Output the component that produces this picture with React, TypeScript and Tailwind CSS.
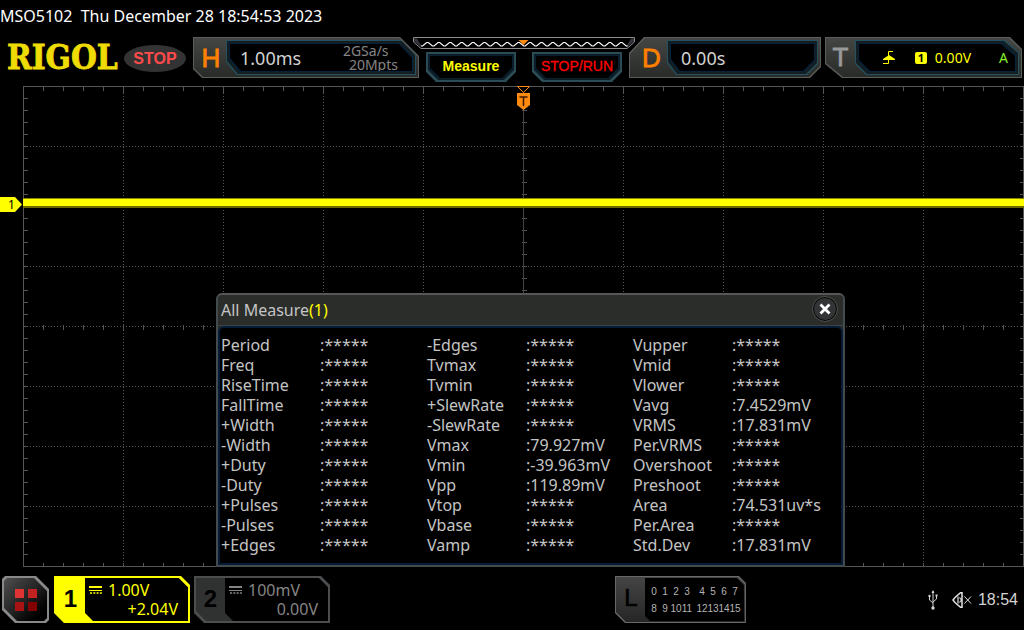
import React from "react";

const CUT_H_OUTER =
  "[clip-path:polygon(0_0,calc(100%_-_19px)_0,100%_19px,100%_100%,9px_100%,0_calc(100%_-_9px))]";
const CUT_H_INNER =
  "[clip-path:polygon(0_0,calc(100%_-_13px)_0,100%_14px,100%_100%,11px_100%,0_calc(100%_-_13px))]";
const CUT_D_OUTER =
  "[clip-path:polygon(15px_0,100%_0,100%_calc(100%_-_11px),calc(100%_-_11px)_100%,0_100%,0_16px)]";
const CUT_D_INNER =
  "[clip-path:polygon(0_0,100%_0,100%_calc(100%_-_11px),calc(100%_-_11px)_100%,9px_100%,0_calc(100%_-_12px))]";
const CUT_T_OUTER =
  "[clip-path:polygon(0_0,calc(100%_-_12px)_0,100%_12px,100%_100%,17px_100%,0_calc(100%_-_14px))]";
const CUT_T_INNER =
  "[clip-path:polygon(0_0,calc(100%_-_14px)_0,100%_12px,100%_100%,11px_100%,0_calc(100%_-_11px))]";
const CUT_SOFT_KEY =
  "[clip-path:polygon(0_0,100%_0,100%_calc(100%_-_10px),calc(100%_-_10px)_100%,10px_100%,0_calc(100%_-_10px))]";
const CUT_CHANNEL =
  "[clip-path:polygon(0_0,calc(100%_-_9px)_0,100%_9px,100%_100%,10px_100%,0_calc(100%_-_10px))]";
const CUT_CHANNEL_SCREEN =
  "[clip-path:polygon(0_0,calc(100%_-_9px)_0,100%_9px,100%_100%,8px_100%,0_calc(100%_-_8px))]";
const CUT_LOGIC =
  "[clip-path:polygon(0_0,calc(100%_-_7px)_0,100%_7px,100%_100%,10px_100%,0_calc(100%_-_10px))]";
const CUT_LOGIC_SCREEN =
  "[clip-path:polygon(0_0,calc(100%_-_7px)_0,100%_7px,100%_100%,5px_100%,0_calc(100%_-_5px))]";
const CUT_MENU =
  "[clip-path:polygon(3px_0,calc(100%_-_13px)_0,100%_13px,100%_calc(100%_-_3px),calc(100%_-_3px)_100%,13px_100%,0_calc(100%_-_13px),0_3px)]";

type PanelProps = {
  letter: string;
  letterClass: string;
  outer: string;
  inner: string;
  className?: string;
  children: React.ReactNode;
};

function Panel({ letter, letterClass, outer, inner, className = "", children }: PanelProps) {
  return (
    <button type="button" className={`flex h-[41px] bg-[#5a5d5a] p-px text-left ${outer} ${className}`}>
      <span className={`flex h-full grow bg-linear-to-b from-[#434643] to-[#292b29] py-0.5 pr-0.5 ${outer}`}>
        <span className={`flex shrink-0 items-center justify-center font-['Liberation_Sans'] text-[26px] leading-none ${letterClass}`}>
          {letter}
        </span>
        <span className={`flex grow bg-[#24505f] p-px ${inner}`}>
          <span className={`flex grow bg-[#141d20] p-0.5 ${inner}`}>
            <span className={`flex grow bg-[#06223c] p-px ${inner}`}>
              <span className={`flex grow items-center bg-black ${inner}`}>{children}</span>
            </span>
          </span>
        </span>
      </span>
    </button>
  );
}

function SoftKey({ className, children }: { className: string; children: React.ReactNode }) {
  return (
    <button type="button" className={`flex h-[30px] w-[90px] bg-[#2b4c57] p-0.5 ${CUT_SOFT_KEY}`}>
      <span className={`flex h-full grow bg-[#101a1d] p-px ${CUT_SOFT_KEY}`}>
        <span className={`flex grow bg-[#062036] p-px ${CUT_SOFT_KEY}`}>
          <span
            className={`flex grow items-center justify-center bg-black pb-0.5 font-['Liberation_Sans'] text-sm leading-none ${CUT_SOFT_KEY} ${className}`}
          >
            {children}
          </span>
        </span>
      </span>
    </button>
  );
}

function MemoryBar() {
  const points: string[] = [];
  for (let i = 0; i <= 36; i++) {
    const x = 8 + i * 5.7;
    points.push(`${x},${i % 2 ? 5.5 : 9} ${x + 1.6},${i % 2 ? 5.5 : 9}`);
  }
  return (
    <svg viewBox="0 0 222 13" className="h-[13px] w-[222px]" aria-hidden="true">
      <path d="M.5 .5H221.5V5L214 11.5H8L.5 5Z" fill="#000" stroke="#8b8b90" />
      <path d="M1 1.5H4L9 10H8L1 4.5Z M221 1.5H218L213 10H214L221 4.5Z" fill="#34343e" />
      <polyline points={points.join(" ")} fill="none" stroke="#fff" strokeWidth="1.2" />
      <path d="M105.500 3H115.500L110.500 8Z" fill="#ff8a10" />
    </svg>
  );
}

function Header() {
  return (
    <header className="grid h-[49px] grid-cols-[193px_226fr_210fr_192fr_203fr] items-start">
      <div className="flex h-[41px] items-center gap-1.5 pl-[7px]">
        <span className="w-[111px] font-['DejaVu_Serif_Condensed','DejaVu_Serif',serif] text-[33px] leading-none font-bold text-[#efdc05] [-webkit-text-stroke:0.8px]">
          RIGOL
        </span>
        <span className="mt-0.5 flex h-[27px] w-[62px] items-center justify-center rounded-[50%] bg-[#333] font-['Liberation_Sans'] text-base leading-none font-bold text-[#ff4b4b]">
          STOP
        </span>
      </div>

      <Panel letter="H" letterClass="w-8 pl-0.5 text-[#ff8000] [-webkit-text-stroke:0.8px]" outer={CUT_H_OUTER} inner={CUT_H_INNER}>
        <span className="grow pl-2.5 text-lg leading-none text-[#d2d2d2]">1.00ms</span>
        <span className="flex flex-col pr-3.5 text-sm leading-3.5 text-[#858585]">
          <span>2GSa/s</span>
          <span className="pl-1.5">20Mpts</span>
        </span>
      </Panel>

      <div className="relative z-10 -mx-1.5 flex flex-col items-center gap-0.5">
        <MemoryBar />
        <div className="flex gap-4">
          <SoftKey className="font-bold text-[#ffff00]">Measure</SoftKey>
          <SoftKey className="text-[#ff0000] [-webkit-text-stroke:0.3px]">STOP/RUN</SoftKey>
        </div>
      </div>

      <Panel letter="D" letterClass="w-[37px] pl-1.5 text-[#ff8000] [-webkit-text-stroke:0.8px]" outer={CUT_D_OUTER} inner={CUT_D_INNER}>
        <span className="pl-2.5 text-lg leading-none text-[#d2d2d2]">0.00s</span>
      </Panel>

      <Panel
        letter="T"
        letterClass="w-[29px] pb-0.5 text-[#999] [-webkit-text-stroke:0.8px]"
        outer={CUT_T_OUTER}
        inner={CUT_T_INNER}
        className="mr-0.5 ml-1"
      >
        <span className="flex grow items-center justify-end pr-[7px] text-sm leading-none text-[#ffff00]">
          <svg viewBox="0 0 12 13" className="mr-5 h-[13px] w-3" aria-hidden="true">
            <path d="M10 .5H5.500V12.500H0" fill="none" stroke="#ffff00" />
            <path d="M0 9V8L6 4L12 8V9Z" fill="#ffff00" />
          </svg>
          <span className="mr-2 flex size-3 items-center justify-center rounded-xs bg-[#ffff00] text-[11px] leading-none font-bold text-black">
            1
          </span>
          <span>0.00V</span>
          <span className="ml-7 text-[#86f02c]">A</span>
        </span>
      </Panel>
    </header>
  );
}

const range = (n: number) => Array.from({ length: n }, (_, i) => i);

function Graticule() {
  return (
    <svg className="absolute inset-0 h-full w-full overflow-visible" shapeRendering="crispEdges" aria-hidden="true">
      <g transform="translate(.5 .5)" stroke="#555" fill="none">
        <rect width="100%" height="100%" />
        {range(9).map((i) => (
          <g key={`c${i}`}>
            <line x1={`${(i + 1) * 10}%`} x2={`${(i + 1) * 10}%`} y1="0" y2="100%" strokeDasharray="1 2" />
            <line x1={`${(i + 1) * 10}%`} x2={`${(i + 1) * 10}%`} y1="0" y2="7" />
          </g>
        ))}
        {range(7).map((i) => (
          <line key={`r${i}`} y1={`${(i + 1) * 12.5}%`} y2={`${(i + 1) * 12.5}%`} x1="0" x2="100%" strokeDasharray="1 2" />
        ))}
        {range(49).map((i) => {
          const x = `${(i + 1) * 2}%`;
          return (
            <g key={`x${i}`}>
              <line x1={x} x2={x} y1="0" y2="4" />
              <svg y="50%" overflow="visible">
                <line x1={x} x2={x} y1="-2" y2="3" />
              </svg>
              <svg y="100%" overflow="visible">
                <line x1={x} x2={x} y1="-4" y2="0" />
              </svg>
            </g>
          );
        })}
        {range(39).map((i) => {
          const y = `${(i + 1) * 2.5}%`;
          return (
            <g key={`y${i}`}>
              <line y1={y} y2={y} x1="0" x2="4" />
              <svg x="50%" overflow="visible">
                <line y1={y} y2={y} x1="-2" x2="3" />
              </svg>
              <svg x="100%" overflow="visible">
                <line y1={y} y2={y} x1="-4" x2="0" />
              </svg>
            </g>
          );
        })}
        <line x1="50%" x2="50%" y1="0" y2="100%" stroke="#444" />
      </g>
    </svg>
  );
}

const NONE = "*****";
const MEASUREMENTS = [
  ["Period", NONE, "-Edges", NONE, "Vupper", NONE],
  ["Freq", NONE, "Tvmax", NONE, "Vmid", NONE],
  ["RiseTime", NONE, "Tvmin", NONE, "Vlower", NONE],
  ["FallTime", NONE, "+SlewRate", NONE, "Vavg", "7.4529mV"],
  ["+Width", NONE, "-SlewRate", NONE, "VRMS", "17.831mV"],
  ["-Width", NONE, "Vmax", "79.927mV", "Per.VRMS", NONE],
  ["+Duty", NONE, "Vmin", "-39.963mV", "Overshoot", NONE],
  ["-Duty", NONE, "Vpp", "119.89mV", "Preshoot", NONE],
  ["+Pulses", NONE, "Vtop", NONE, "Area", "74.531uv*s"],
  ["-Pulses", NONE, "Vbase", NONE, "Per.Area", NONE],
  ["+Edges", NONE, "Vamp", NONE, "Std.Dev", "17.831mV"],
];

function MeasureWindow() {
  return (
    <section
      aria-label="All Measure"
      className="absolute top-[207px] left-[193px] w-[629px] rounded-t-md border-2 border-[#444b4d] border-t-[#555855] bg-[#2b2d2b] text-base text-[#c4c4c4]"
    >
      <div className="flex h-[31px] items-center justify-between border-b border-[#3a4448] pr-1.5 pl-[3px]">
        <h2>
          All Measure<span className="text-[#ffff00]">(1)</span>
        </h2>
        <button
          type="button"
          aria-label="Close"
          className="mb-0.5 flex size-6 items-center justify-center rounded-full border border-black bg-[#333436] outline outline-[#4a4c4a]"
        >
          <svg viewBox="0 0 12 12" className="size-3" aria-hidden="true">
            <path d="M1.500 1.500L10.500 10.500M10.500 1.500L1.500 10.500" stroke="#fff" strokeWidth="2.800" />
          </svg>
        </button>
      </div>
      <div className="rounded-t-md border-2 border-[#061c36] bg-black pt-[7px] pb-2 pl-px">
        <table className="w-full table-fixed border-collapse text-left leading-5">
          <colgroup>
            <col className="w-[99px]" />
            <col className="w-[107px]" />
            <col className="w-[99px]" />
            <col className="w-[107px]" />
            <col className="w-[99px]" />
            <col />
          </colgroup>
          <tbody>
            {MEASUREMENTS.map((row) => (
              <tr key={row[0]} className="h-5">
                {row.map((cell, i) =>
                  i % 2 === 0 ? (
                    <th key={i} scope="row" className="p-0 font-normal whitespace-nowrap">
                      {cell}
                    </th>
                  ) : (
                    <td key={i} className="p-0 whitespace-nowrap">
                      :{cell}
                    </td>
                  ),
                )}
              </tr>
            ))}
          </tbody>
        </table>
      </div>
    </section>
  );
}

function Plot() {
  return (
    <main className="relative mr-px ml-[23px] min-h-[480px] grow">
      <Graticule />
      <div className="absolute top-28 -right-px left-0 h-2.5 border-t border-b-2 border-t-[#8a8a00] border-b-[#6e6a00] bg-[#ffff00]" />
      <div className="absolute top-[111px] -left-[23px] flex h-[15px] w-[22px] items-center bg-[#ffff00] pl-2 text-xs leading-none text-black [clip-path:polygon(0_0,15px_0,100%_50%,15px_100%,0_100%)]">
        1
      </div>
      <svg viewBox="0 0 14 24" className="absolute top-0 left-1/2 ml-[-6px] h-6 w-3.5" aria-hidden="true">
        <path d="M.5 .5H12.500L6.500 6.500Z" fill="#000" stroke="#ff8a10" />
        <path d="M0 7H13V19L6.500 24L0 19Z" fill="#ff8a10" />
        <path d="M2.500 11H10.500M6.500 11V20" stroke="#3a1c00" strokeWidth="1.500" />
      </svg>
      <MeasureWindow />
    </main>
  );
}

function DcCoupling() {
  return (
    <svg viewBox="0 0 13 8" className="h-2 w-[13px]" aria-hidden="true">
      <path d="M0 1H13" stroke="currentColor" strokeWidth="2" />
      <path d="M0 4.500H13" stroke="currentColor" />
      <path d="M1 7H13" stroke="currentColor" strokeWidth="1.500" strokeDasharray="2 1.300" />
    </svg>
  );
}

type ChannelProps = { id: string; scale: string; offset: string; active?: boolean };

function Channel({ id, scale, offset, active = false }: ChannelProps) {
  return (
    <button
      type="button"
      aria-pressed={active}
      className={`flex h-[47px] w-[136px] p-0.5 text-left leading-[19px] ${CUT_CHANNEL} ${
        active ? "bg-[#ffff00] text-[#ffff00]" : "bg-[#4b4d4f] text-[#858585]"
      }`}
    >
      <span className={`flex h-full grow ${CUT_CHANNEL} ${active ? "bg-[#ffff00]" : "bg-[#303131]"}`}>
        <span className="flex w-[29px] items-center justify-center pb-0.5 font-['Liberation_Sans'] text-2xl leading-none font-bold text-black">
          {id}
        </span>
        <span className={`flex grow flex-col justify-center bg-black pr-2.5 pl-1 ${CUT_CHANNEL_SCREEN}`}>
          <span className="flex items-center gap-1.5">
            <DcCoupling />
            {scale}
          </span>
          <span className="text-right">{offset}</span>
        </span>
      </span>
    </button>
  );
}

function LogicDigits({ rows }: { rows: number[][] }) {
  return (
    <span className="grid grid-cols-[repeat(4,11px)] gap-y-1.5 text-center">
      {rows.flat().map((n) => (
        <span key={n}>{n}</span>
      ))}
    </span>
  );
}

function Footer() {
  return (
    <footer className="flex items-start pt-2.5 pb-[7px] pl-0.5">
      <button type="button" aria-label="Menu" className={`flex size-[47px] bg-[#88898a] p-0.5 ${CUT_MENU}`}>
        <span className={`flex h-full grow items-center justify-center bg-linear-to-br from-[#505050] via-[#222] to-black ${CUT_MENU}`}>
          <span className="grid grid-cols-2 gap-1">
            <span className="size-[9px] bg-[#e03434]" />
            <span className="size-[9px] bg-[#c32222]" />
            <span className="size-[9px] bg-[#a81212]" />
            <span className="size-[9px] bg-[#850000]" />
          </span>
        </span>
      </button>
      <div className="ml-[5px] flex grow gap-1">
        <Channel id="1" scale="1.00V" offset="+2.04V" active />
        <Channel id="2" scale="100mV" offset="0.00V" />
      </div>
      <button type="button" aria-label="Logic channels" className={`flex h-[47px] w-[131px] bg-[#666a6a] p-px ${CUT_LOGIC}`}>
        <span className={`flex h-full grow bg-linear-to-b from-[#454545] to-[#262626] p-px ${CUT_LOGIC}`}>
          <span className="flex w-7 items-center justify-center pb-1 font-['Liberation_Sans'] text-2xl leading-none text-black [-webkit-text-stroke:0.6px]">
            L
          </span>
          <span
            className={`flex grow items-center justify-center gap-1 bg-black font-['Liberation_Sans'] text-[10px] leading-[11px] text-[#b4b4b4] ${CUT_LOGIC_SCREEN}`}
          >
            <LogicDigits rows={[[0, 1, 2, 3], [8, 9, 10, 11]]} />
            <LogicDigits rows={[[4, 5, 6, 7], [12, 13, 14, 15]]} />
          </span>
        </span>
      </button>
      <div className="ml-[182px] flex h-[47px] items-center gap-1.5 pr-1.5">
        <svg viewBox="0 0 10 20" className="mr-2 h-5 w-2.5" fill="none" stroke="#d4d4d4" aria-hidden="true">
          <path d="M5 1V18M1.500 6V10L5 13M8.500 6V9L5 12" />
          <path d="M3.500 3L5 0L6.500 3Z M7.500 4.500H9.500V6.500H7.500Z" fill="#d4d4d4" stroke="none" />
          <circle cx="1.500" cy="6" r="1.200" fill="#d4d4d4" stroke="none" />
          <circle cx="5" cy="18" r="1.700" fill="#d4d4d4" stroke="none" />
        </svg>
        <svg viewBox="0 0 20 16" className="h-4 w-5" fill="none" stroke="#e4e4e4" aria-hidden="true">
          <path d="M1 8L3 5.500L8.500 .8H10V15.200H8.500L3 10.500Z" strokeWidth="1.500" />
          <path d="M6 4.500V11.500M7.500 5.500L9.500 8L7.500 10.500" strokeWidth="1.200" />
          <path d="M12.500 4.500L19 11.500M19 4.500L12.500 11.500" />
        </svg>
        <time className="font-['Liberation_Sans'] text-base leading-none text-[#d4d4d4]">18:54</time>
      </div>
    </footer>
  );
}

export default function App() {
  return (
    <div className="flex min-h-screen flex-col bg-black font-['Noto_Sans','Open_Sans',sans-serif] text-white">
      <h1 className="h-[37px] text-base leading-8 whitespace-pre">MSO5102  Thu December 28 18:54:53 2023</h1>
      <Header />
      <Plot />
      <Footer />
    </div>
  );
}
